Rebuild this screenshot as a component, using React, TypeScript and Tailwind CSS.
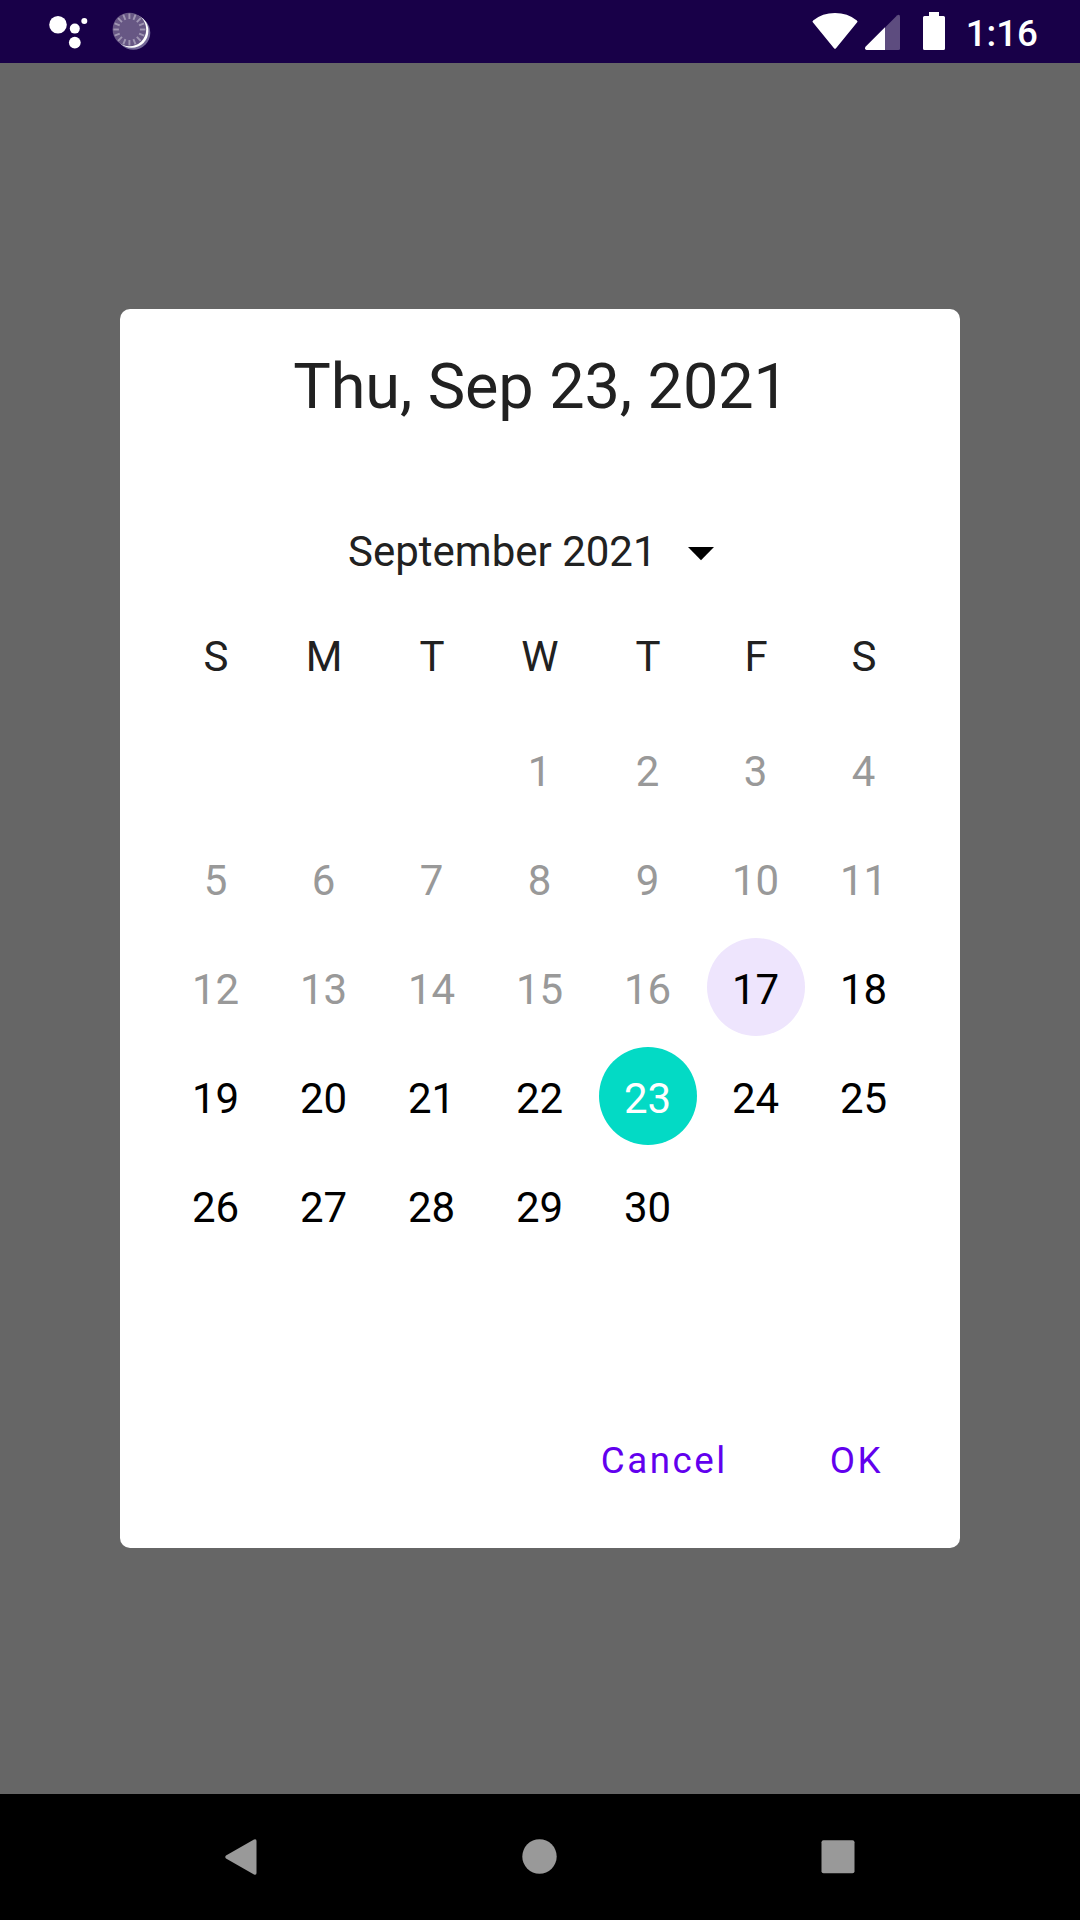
const weekdays = ['S', 'M', 'T', 'W', 'T', 'F', 'S'];
const leadingBlanks = 3;
const today = 17;
const selected = 23;
const cells: (number | null)[] = [
  ...Array.from({ length: leadingBlanks }, () => null),
  ...Array.from({ length: 30 }, (_, i) => i + 1),
];

function AssistantIcon() {
  return (
    <svg className="h-[63px] w-[44px]" viewBox="0 0 44 63" fill="#fff">
      <circle cx="10" cy="24.7" r="8.8" />
      <circle cx="26.8" cy="28.6" r="5" />
      <circle cx="36.3" cy="21" r="3" />
      <circle cx="26.8" cy="42.6" r="5.9" />
    </svg>
  );
}

function SpinnerIcon() {
  const ticks = Array.from({ length: 16 }, (_, i) => i * 22.5);
  return (
    <svg className="h-[63px] w-[42px]" viewBox="0 0 42 63">
      <circle cx="23.3" cy="32.8" r="17" fill="#746998" />
      <circle cx="21.6" cy="31" r="16.8" fill="#fff" />
      <circle cx="19.4" cy="29.5" r="16.8" fill="#675784" />
      {ticks.map((a) => (
        <line
          key={a}
          x1="19.4"
          y1="13.5"
          x2="19.4"
          y2="19"
          stroke="#a096b3"
          strokeWidth="1.9"
          transform={`rotate(${a} 19.4 29.5)`}
        />
      ))}
    </svg>
  );
}

function StatusBar() {
  return (
    <header className="flex h-[63px] shrink-0 items-start bg-[#180048] pl-12 text-white">
      <AssistantIcon />
      <span className="ml-[18px]">
        <SpinnerIcon />
      </span>
      <div className="ml-auto flex items-start pr-[42px]">
        <svg className="h-[63px] w-[48px]" viewBox="0 0 48 63" fill="#fff">
          <path d="M1.8 22.3 Q1 21.2 2.1 20.4 Q11.5 13 24 13 Q36.500 13 45.900 20.400 Q47 21.200 46.200 22.300 L25 48.200 Q24 49.400 23 48.200 Z" />
        </svg>
        <svg className="ml-[5px] h-[63px] w-[37px]" viewBox="0 0 37 63">
          <path d="M21 27.500 L33 15.500 Q36 13.700 36 17 V48.500 Q36 50 34.500 50 H21 Z" fill="#5d4c7f" />
          <path d="M21 27.200 V50 H2.500 Q0 49.400 1.500 46.800 Z" fill="#fff" />
        </svg>
        <svg className="ml-[22px] h-[63px] w-[22px]" viewBox="0 0 22 63" fill="#fff">
          <path d="M6 12 H16 V16 H20.500 Q22 16 22 17.500 V48.500 Q22 50 20.500 50 H1.500 Q0 50 0 48.500 V17.500 Q0 16 1.500 16 H6 Z" />
        </svg>
        <span className="ml-[21px] pt-[2px] text-[36.75px] font-medium leading-[63px]">1:16</span>
      </div>
    </header>
  );
}

function Day({ day }: { day: number | null }) {
  if (day === null) return <div />;
  const tone =
    day === selected
      ? 'bg-[#03dac5] text-white'
      : day === today
        ? 'bg-[#eee5fd] text-black'
        : day < today
          ? 'text-[#999999]'
          : 'text-black';
  return (
    <button
      className={`mt-[5px] flex size-[98px] items-center justify-center rounded-full pt-[6px] pr-px text-[42px] leading-[50px] ${tone}`}
    >
      {day}
    </button>
  );
}

function DatePicker() {
  return (
    <section className="flex h-[1239px] w-[840px] flex-col rounded-[10px] bg-white text-[#212121]">
      <h1 className="mt-[41px] pl-[2px] text-center text-[63px] leading-[74px] tracking-[-0.1px]">
        Thu, Sep 23, 2021
      </h1>
      <button className="mt-[103px] ml-[228px] flex h-[50px] items-center self-start text-[42px] leading-[50px]">
        September 2021
        <svg className="mt-[3px] ml-[31px] h-[14px] w-[26px]" viewBox="0 0 26 14">
          <path d="M0 0 H26 L13 13.200 Z" fill="#000" />
        </svg>
      </button>
      <div className="mx-[42px] mt-[55px] grid grid-cols-7 text-center text-[42px] leading-[50px]">
        {weekdays.map((d, i) => (
          <span key={i}>{d}</span>
        ))}
      </div>
      <div className="mx-[42px] mt-[33px] grid auto-rows-[109px] grid-cols-7 justify-items-center">
        {cells.map((d, i) => (
          <Day key={i} day={d} />
        ))}
      </div>
      <div className="mt-auto mr-[77px] mb-[65px] flex justify-end gap-[102px] text-[36.75px] leading-[44px] tracking-[2.5px] text-[#6200ee]">
        <button>Cancel</button>
        <button>OK</button>
      </div>
    </section>
  );
}

function NavigationBar() {
  return (
    <nav className="flex h-[126px] shrink-0 items-center justify-between bg-black px-[221px]">
      <svg className="size-[40px]" viewBox="0 0 40 40" fill="#999">
        <path d="M33 2.500 Q35.500 1.500 35.500 4 V36 Q35.500 38.500 33 37.500 L5 21.500 Q3.500 20 5 18.500 Z" />
      </svg>
      <svg className="size-[40px]" viewBox="0 0 40 40">
        <circle cx="19.500" cy="19.500" r="17.200" fill="#999" />
      </svg>
      <svg className="size-[40px]" viewBox="0 0 40 40">
        <rect x="2.500" y="3.300" width="33" height="33" rx="2" fill="#999" />
      </svg>
    </nav>
  );
}

export default function App() {
  return (
    <div className="flex h-[1920px] w-[1080px] flex-col overflow-hidden bg-[#666666] font-['Roboto',sans-serif]">
      <StatusBar />
      <main className="flex flex-1 items-start justify-center pt-[246px]">
        <DatePicker />
      </main>
      <NavigationBar />
    </div>
  );
}
